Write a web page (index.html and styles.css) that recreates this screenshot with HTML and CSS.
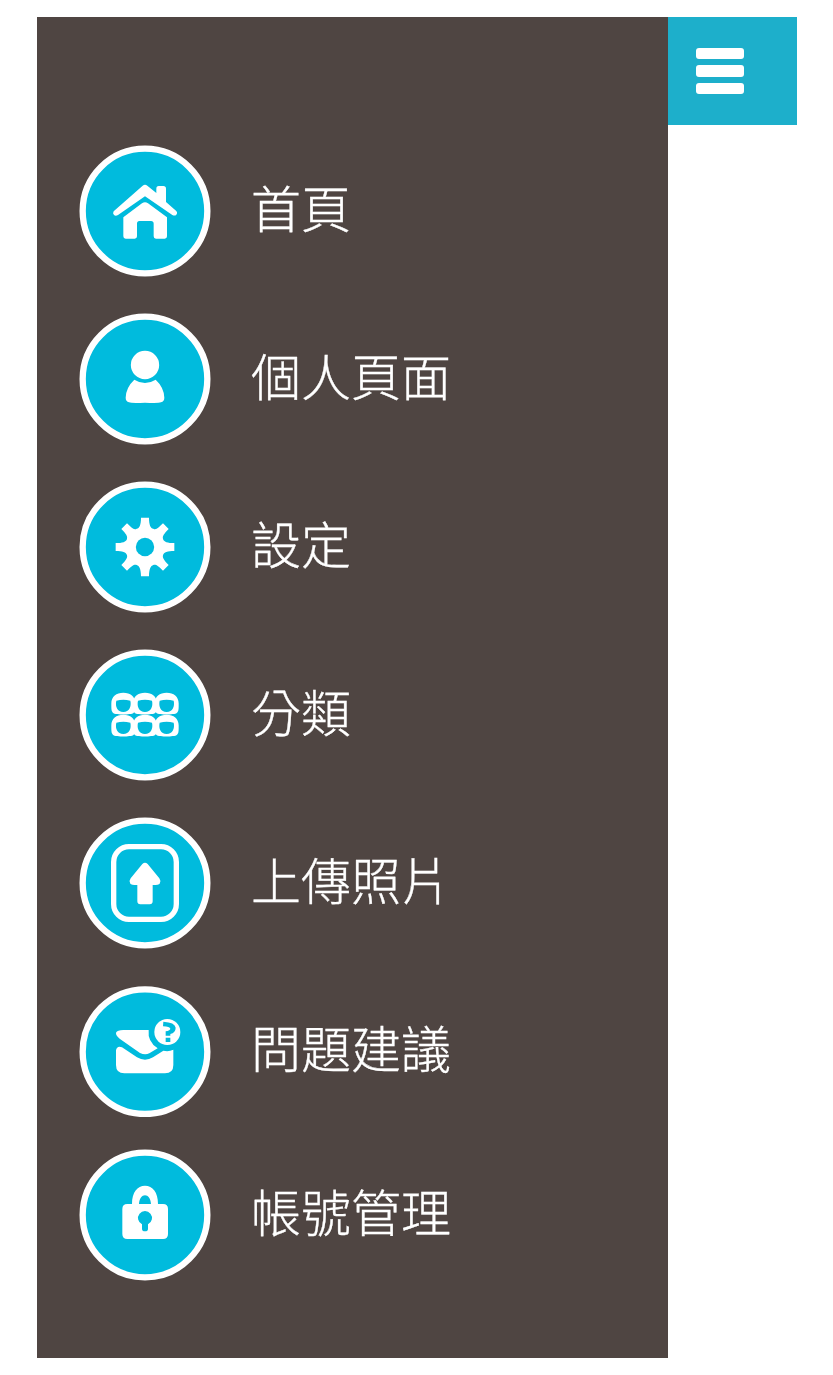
FILE: index.html
```html
<!DOCTYPE html>
<html lang="zh-Hant">
<head>
<meta charset="utf-8">
<title>選單</title>
<link rel="stylesheet" href="styles.css">
</head>
<body>
<div class="screen">
  <nav class="sidebar">
    <a class="item">
      <svg class="icon" viewBox="27 27 396 396">
        <circle class="disc" cx="225" cy="225" r="187"/>
        <path d="M131 226Q127 232 132 237Q137 241 144 237L225 181L307 237Q314 241 319 236Q324 229 318 224L288 198V158Q288 150 280 150H266Q259 150 259 158V171L232 149Q225 143 218 149Z"/>
        <path d="M160 244L216 202Q225 195 234 202L291 244V301Q291 308 284 308H258Q251 308 251 301V263Q251 255 243 255H208Q201 255 201 263V301Q201 308 194 308H167Q160 308 160 301Z"/>
      </svg>
      <span class="label">首頁</span>
    </a>
    <a class="item">
      <svg class="icon" viewBox="27 27 396 396">
        <circle class="disc" cx="225" cy="225" r="187"/>
        <circle cx="225" cy="183" r="42.5"/>
        <path d="M193 227Q225 247 257 227Q282 250 283 281Q283 292 273 295Q265 298 225 296Q185 298 177 295Q167 292 167 281Q168 250 193 227Z"/>
      </svg>
      <span class="label">個人頁面</span>
    </a>
    <a class="item">
      <svg class="icon" viewBox="27 27 396 396">
        <circle class="disc" cx="225" cy="225" r="187"/>
        <path d="M213 137H237C237 159 242 169 250 170C258 175 266 167 279 154L296 171C281 186 277 193 279 200C281 210 293 213 313 213V237C293 237 281 240 279 250C277 257 281 264 296 279L279 296C264 281 257 276 250 279C242 281 237 292 237 313H213C213 292 208 281 200 279C193 276 186 281 171 296L154 279C169 264 173 257 171 250C169 240 157 237 137 237V213C157 213 169 210 171 200C173 193 169 186 154 171L171 154C184 167 192 175 200 170C208 169 213 159 213 137Z"/>
        <circle class="hole" cx="225" cy="225" r="27.5"/>
      </svg>
      <span class="label">設定</span>
    </a>
    <a class="item">
      <svg class="icon" viewBox="27 27 396 396">
        <circle class="disc" cx="225" cy="225" r="187"/>
        <defs>
          <path id="tile" fill-rule="evenodd" d="M-36 -2C-36 -22 -21 -34 0 -34C21 -34 36 -22 36 -2V8C36 26 31 29 18 30Q0 33 -18 30C-31 29 -36 26 -36 8ZM-21 -10C-25 7 -18 24 0 24C18 24 25 7 21 -10Q0 -16 -21 -10Z"/>
        </defs>
        <use href="#tile" x="160" y="192"/>
        <use href="#tile" x="225" y="192"/>
        <use href="#tile" x="290" y="192"/>
        <use href="#tile" x="160" y="258"/>
        <use href="#tile" x="225" y="258"/>
        <use href="#tile" x="290" y="258"/>
      </svg>
      <span class="label">分類</span>
    </a>
    <a class="item">
      <svg class="icon" viewBox="27 27 396 396">
        <circle class="disc" cx="225" cy="225" r="187"/>
        <rect class="frame" x="131" y="116" width="188" height="218" rx="46"/>
        <path d="M217 168Q225 161 233 168L268 211Q274 219 269 227Q267 231 248 231V280Q248 289 239 289H211Q202 289 202 280V231Q183 231 181 227Q176 219 182 211Z"/>
      </svg>
      <span class="label">上傳照片</span>
    </a>
    <a class="item">
      <svg class="icon" viewBox="27 25 396 396">
        <circle class="disc" cx="225" cy="225" r="187"/>
        <path d="M160 160H236Q232 195 263 215L238 230Q225 236 210 229L150 187Q137 176 138 168Q142 160 160 160Z"/>
        <path d="M138 221Q141 206 156 212L201 242Q225 256 249 242L280 222Q296 226 310 219V265Q310 290 285 290H163Q138 290 138 265Z"/>
        <circle cx="292" cy="166" r="39"/>
        <path class="hole" d="M280 135Q315 137 317 153Q317 168 301 172V177H287V164Q301 161 301 156Q300 150 279 149ZM287 183H301V196H287Z"/>
      </svg>
      <span class="label">問題建議</span>
    </a>
    <a class="item last">
      <svg class="icon" viewBox="27 27 396 396">
        <circle class="disc" cx="225" cy="225" r="187"/>
        <path fill-rule="evenodd" d="M186 192C186 156 202 137 225 137C248 137 264 156 264 192H279Q294 192 294 207V282Q294 297 279 297H172Q157 297 157 282V207Q157 192 172 192ZM207 192H243C242 176 234 166 225 166C216 166 208 176 207 192Z"/>
        <path class="hole" d="M216 253A21 21 0 1 1 234 253V266Q234 274 225 274Q216 274 216 266Z"/>
      </svg>
      <span class="label">帳號管理</span>
    </a>
  </nav>
  <button class="toggle" aria-label="選單">
    <span class="bar"></span>
    <span class="bar"></span>
    <span class="bar"></span>
  </button>
</div>
</body>
</html>
```
FILE: styles.css
```css
body {
  margin: 0;
  background: #fff;
}
.screen {
  display: flex;
  align-items: flex-start;
  padding: 17px 36px 0 37px;
}
.sidebar {
  box-sizing: border-box;
  width: 631.3px;
  height: 1340.5px;
  padding: 128px 0 0 42px;
  display: flex;
  flex-direction: column;
  gap: 36px;
  background: #4f4542;
}
.item {
  display: flex;
  align-items: center;
  gap: 40px;
  height: 132px;
}
.last {
  margin-top: -4px;
}
.icon {
  width: 132px;
  height: 132px;
  flex: none;
  fill: #fff;
}
.disc {
  fill: #00bbdd;
  stroke: #fff;
  stroke-width: 19;
}
.hole {
  fill: #00bbdd;
}
.frame {
  fill: none;
  stroke: #fff;
  stroke-width: 16;
}
.label {
  color: #fff;
  font: 300 50px/60px "Noto Sans CJK TC", sans-serif;
  -webkit-text-stroke: 0.35px #fff;
  padding-bottom: 11px;
}
.toggle {
  display: flex;
  flex-direction: column;
  gap: 6px;
  box-sizing: border-box;
  width: 128.7px;
  height: 108px;
  padding: 31px 0 0 28px;
  border: 0;
  background: #1dafcb;
}
.bar {
  width: 48px;
  height: 11.3px;
  border-radius: 3px;
  background: #fff;
}
```
